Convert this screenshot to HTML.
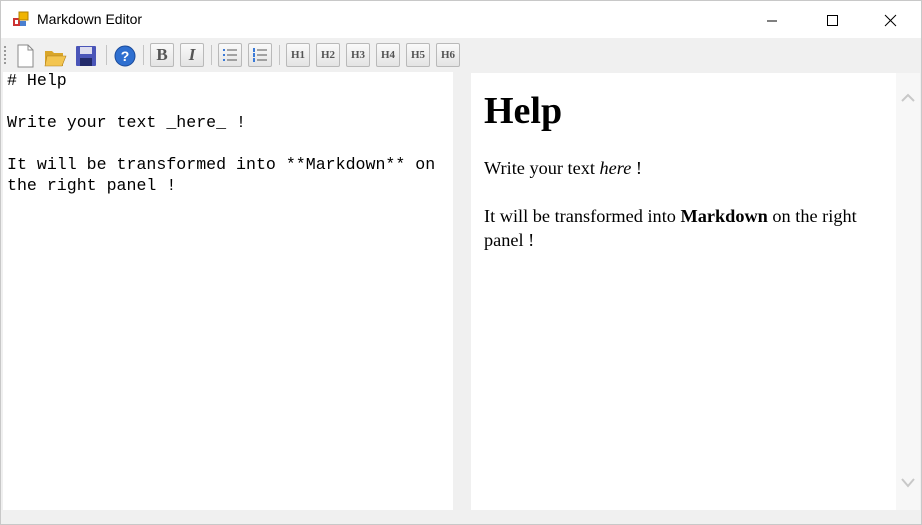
<!DOCTYPE html>
<html><head><meta charset="utf-8"><style>
*{margin:0;padding:0;box-sizing:border-box}
body{width:922px;height:525px;overflow:hidden;background:#f0f0f0;font-family:"Liberation Sans",sans-serif;position:relative}
.win{position:absolute;left:0;top:0;width:922px;height:525px;border:1px solid #c8c8c8}
.title{position:absolute;left:1px;top:1px;width:920px;height:37px;background:#fff}
.title .t{position:absolute;left:36px;top:10px;font-size:14px;color:#000;font-family:"Liberation Sans",sans-serif}
.btn{position:absolute;top:43px;width:24px;height:24px;border:1px solid #b9b9b9;background:linear-gradient(#fafafa,#e4e4e4);border-radius:2px;font-family:"Liberation Serif",serif;font-weight:bold;color:#555;text-align:center;line-height:22px}
.h{font-size:11px}
.sep{position:absolute;top:45px;width:1px;height:20px;background:#c4c4c4}
.left{position:absolute;left:3px;top:72px;width:450px;height:438px;background:#fff;font-family:"Liberation Mono",monospace;font-size:16.6px;line-height:21px;color:#000;padding:0 4px;white-space:pre}
.left div{position:relative;top:-2px}
.right{position:absolute;left:471px;top:73px;width:425px;height:437px;background:#fff;font-family:"Liberation Serif",serif;color:#000;padding-left:13px;padding-right:30px}
.sb{position:absolute;left:896px;top:73px;width:24px;height:437px;background:#f7f7f7}
h1{font-size:38px;margin-top:17px;line-height:42px}
p{font-size:18.3px;line-height:24px;margin-top:24px}
</style></head><body>
<div class="win"></div>
<div class="title">
<svg style="position:absolute;left:11px;top:9px" width="18" height="18" viewBox="0 0 18 18"><rect x="1" y="8" width="7" height="8" fill="#c33"/><rect x="3" y="10" width="3" height="4" fill="#fff"/><rect x="7" y="2" width="9" height="8" fill="#f0b400" stroke="#b08000"/><rect x="8" y="11" width="6" height="5" fill="#4a7fd0"/></svg>
<div class="t">Markdown Editor</div>
<svg style="position:absolute;left:766px;top:13px" width="130" height="14"><line x1="0" y1="7" x2="10" y2="7" stroke="#000"/><rect x="60.5" y="1.5" width="10" height="10" fill="none" stroke="#000"/><path d="M118 1L129 12M129 1L118 12" stroke="#000"/></svg>
</div>
<svg style="position:absolute;left:4px;top:46px" width="4" height="20"><g fill="#999"><rect y="0" width="2" height="2"/><rect y="4" width="2" height="2"/><rect y="8" width="2" height="2"/><rect y="12" width="2" height="2"/><rect y="16" width="2" height="2"/></g></svg>
<svg style="position:absolute;left:14px;top:43px" width="90" height="26">
<path d="M4 2h10l5 5v17H4z" fill="#fff" stroke="#888"/><path d="M14 2v5h5" fill="none" stroke="#888"/>
<path d="M31 8h7l2 2h9v13H31z" fill="#d9a62a"/><path d="M33 13h19l-4 10H31z" fill="#f3c550" stroke="#b08020" stroke-width=".6"/>
<rect x="62" y="3" width="20" height="20" fill="#4a55b8" rx="1"/><rect x="66" y="4" width="12" height="7" fill="#dde"/><rect x="66" y="15" width="12" height="8" fill="#222a6a"/>
</svg>
<div class="sep" style="left:106px"></div>
<svg style="position:absolute;left:113px;top:44px" width="24" height="24"><circle cx="12" cy="12" r="10" fill="#2e6fd0" stroke="#1a4a9a"/><text x="12" y="17" font-size="14" font-weight="bold" fill="#fff" text-anchor="middle" font-family="Liberation Sans">?</text></svg>
<div class="sep" style="left:143px"></div>
<div class="btn" style="left:150px;font-size:17px">B</div>
<div class="btn" style="left:180px;font-size:17px;font-style:italic">I</div>
<div class="sep" style="left:211px"></div>
<div class="btn" style="left:218px"><svg width="22" height="22"><g fill="#3a7ad8"><rect x="4" y="5" width="2" height="2"/><rect x="4" y="10" width="2" height="2"/><rect x="4" y="15" width="2" height="2"/></g><g stroke="#555"><line x1="8" y1="6" x2="18" y2="6"/><line x1="8" y1="11" x2="18" y2="11"/><line x1="8" y1="16" x2="18" y2="16"/></g></svg></div>
<div class="btn" style="left:248px"><svg width="22" height="22"><g fill="#3a7ad8"><rect x="4" y="4" width="2" height="4"/><rect x="4" y="9" width="2" height="4"/><rect x="4" y="14" width="2" height="4"/></g><g stroke="#555"><line x1="8" y1="6" x2="18" y2="6"/><line x1="8" y1="11" x2="18" y2="11"/><line x1="8" y1="16" x2="18" y2="16"/></g></svg></div>
<div class="sep" style="left:279px"></div>
<div class="btn h" style="left:286px">H1</div>
<div class="btn h" style="left:316px">H2</div>
<div class="btn h" style="left:346px">H3</div>
<div class="btn h" style="left:376px">H4</div>
<div class="btn h" style="left:406px">H5</div>
<div class="btn h" style="left:436px">H6</div>
<div class="left"><div># Help

Write your text _here_ !

It will be transformed into **Markdown** on
the right panel !</div></div>
<div class="right">
<h1>Help</h1>
<p>Write your text <i>here</i> !</p>
<p>It will be transformed into <b>Markdown</b> on the right panel !</p>
</div>
<div class="sb"><svg width="24" height="437"><path d="M6 28l6-6 6 6" fill="none" stroke="#c8c8c8" stroke-width="2"/><path d="M6 406l6 7 6-7" fill="none" stroke="#c8c8c8" stroke-width="2"/></svg></div>
</body></html>
